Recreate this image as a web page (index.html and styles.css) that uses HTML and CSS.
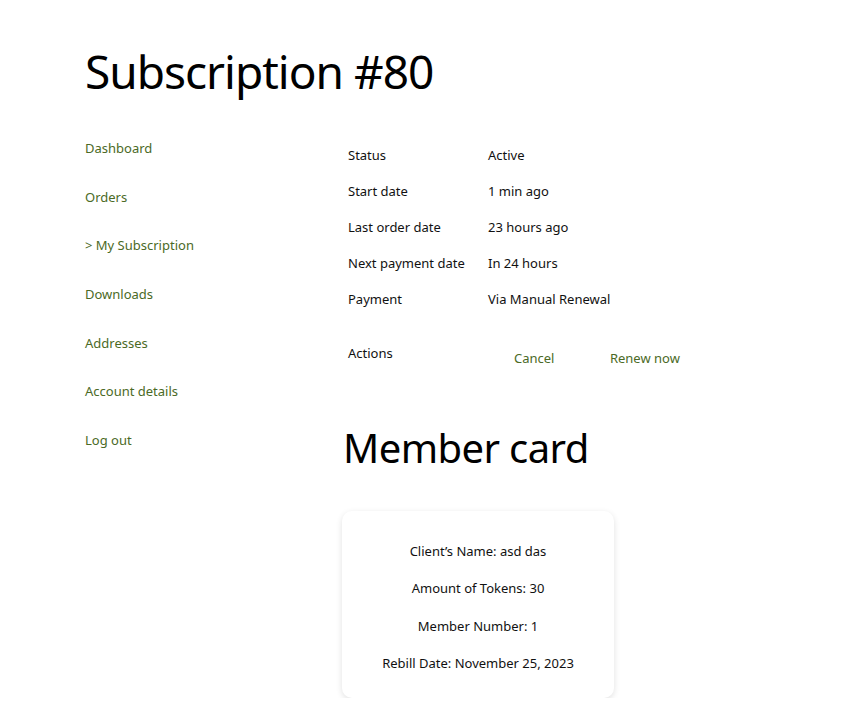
FILE: index.html
```html
<!DOCTYPE html>
<html lang="en">
  <head>
    <meta charset="UTF-8" />
    <meta name="viewport" content="width=device-width, initial-scale=1.0" />
    <title>Subscription #80</title>
    <link rel="stylesheet" href="styles.css">
  </head>
  <body>
    <div class="page">
      <h1 class="page-title">Subscription #80</h1>

      <div class="account">
        <!-- 左侧导航 -->
        <nav class="account-nav">
          <a href="#">Dashboard</a>
          <a href="#">Orders</a>
          <a href="#" class="active">&gt; My Subscription</a>
          <a href="#">Downloads</a>
          <a href="#">Addresses</a>
          <a href="#">Account details</a>
          <a href="#">Log out</a>
        </nav>

        <!-- 订阅详情 -->
        <div class="account-content">
          <table class="sub-details">
            <tr><td>Status</td><td>Active</td></tr>
            <tr><td>Start date</td><td>1 min ago</td></tr>
            <tr><td>Last order date</td><td>23 hours ago</td></tr>
            <tr><td>Next payment date</td><td>In 24 hours</td></tr>
            <tr><td>Payment</td><td>Via Manual Renewal</td></tr>
            <tr class="actions-row">
              <td>Actions</td>
              <td>
                <a href="#" class="button">Cancel</a>
                <a href="#" class="button">Renew now</a>
              </td>
            </tr>
          </table>

          <h2 class="card-title">Member card</h2>

          <div class="member-card">
            <p>Client&rsquo;s Name: asd das</p>
            <p>Amount of Tokens: 30</p>
            <p>Member Number: 1</p>
            <p>Rebill Date: November 25, 2023</p>
          </div>
        </div>
      </div>
    </div>
  </body>
</html>
```

FILE: styles.css
```css
/* 全局样式 */
body {
  font-family: "Segoe UI", "Noto Sans", "Open Sans", sans-serif;
  margin: 0;
  background: #ffffff;
  color: #111111;
  font-size: 13px;
}

a {
  color: #4b6a26;
  text-decoration: none;
}

.page {
  padding: 41px 0 0 85px;
}

.page-title {
  margin: 0 0 36px 0;
  font-size: 46px;
  font-weight: 400;
  letter-spacing: -1px;
  line-height: 60px;
  color: #000000;
}

/* 两栏布局 */
.account {
  display: flex;
}

.account-nav {
  width: 257px;
  display: flex;
  flex-direction: column;
  gap: 28.7px;
  padding-top: 1px;
}

.account-nav a {
  line-height: 20px;
}

/* 订阅详情表格 */
.sub-details {
  border-collapse: collapse;
}

.sub-details td {
  padding: 8px 6px;
  line-height: 20px;
  vertical-align: top;
}

.sub-details td:first-child {
  width: 128px;
}

.actions-row td {
  padding-top: 26px;
}

.button {
  display: inline-block;
  padding: 5px 26px 0 26px;
}

.card-title {
  margin: 47px 0 0 1px;
  font-size: 40px;
  font-weight: 400;
  letter-spacing: -0.6px;
  line-height: 50px;
  color: #000000;
}

/* 会员卡 */
.member-card {
  width: 272px;
  box-sizing: border-box;
  margin-top: 38px;
  padding: 30px 0 25px;
  border-radius: 10px;
  box-shadow: 0 2px 6px rgba(0, 0, 0, 0.12);
  text-align: center;
  display: flex;
  flex-direction: column;
  gap: 17.4px;
}

.member-card p {
  margin: 0;
  line-height: 20px;
}
```
